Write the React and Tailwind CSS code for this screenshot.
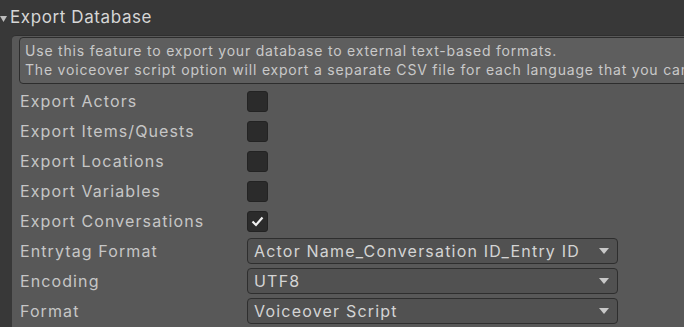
import React from "react";

const toggles = [
  { label: "Export Actors", checked: false },
  { label: "Export Items/Quests", checked: false },
  { label: "Export Locations", checked: false },
  { label: "Export Variables", checked: false },
  { label: "Export Conversations", checked: true },
];

const popups = [
  { label: "Entrytag Format", value: "Actor Name_Conversation ID_Entry ID" },
  { label: "Encoding", value: "UTF8" },
  { label: "Format", value: "Voiceover Script" },
];

function Checkbox({ checked }) {
  return (
    <div className="w-[21px] h-[21px] rounded-[3px] bg-[#2b2b2b] border border-[#232323] flex items-center justify-center">
      {checked && (
        <svg width="13" height="11" viewBox="0 0 13 11">
          <polyline points="1.5,5.5 5,9 11.5,1.5" fill="none" stroke="#f0f0f0" strokeWidth="2.2" />
        </svg>
      )}
    </div>
  );
}

function Popup({ value }) {
  return (
    <div className="w-[371px] h-[26px] rounded-[4px] bg-[#515151] border border-[#2e2e2e] flex items-center justify-between pl-[6px] pr-[8px]">
      <span className="text-[#d4d4d4] tracking-[1.2px]">{value}</span>
      <svg width="10" height="6" viewBox="0 0 10 6">
        <polygon points="0,0 10,0 5,6" fill="#c8c8c8" />
      </svg>
    </div>
  );
}

export default function App() {
  return (
    <div
      className="w-[684px] h-[327px] bg-[#383838] overflow-hidden text-[16px]"
      style={{ fontFamily: "Inter, 'Noto Sans', sans-serif" }}
    >
      {/* foldout header */}
      <div className="h-[35px] flex items-center">
        <svg width="8" height="8" viewBox="0 0 8 8" className="mt-[2px]">
          <polygon points="0,1 7,1 3.5,7" fill="#bdbdbd" />
        </svg>
        <span className="ml-[2px] text-[17px] text-[#d6d6d6] tracking-[0.6px]">Export Database</span>
      </div>

      <div className="ml-[12px] h-[292px] bg-[#585858] rounded-tl-[4px] border-t border-[#2f2f2f]">
        {/* help box */}
        <div className="ml-[7px] mt-[1px] w-[700px] h-[47px] rounded-[4px] bg-[#5e5e5e] border border-[#2d2d2d] px-[5px] pt-[3px] text-[14px] leading-[19px] text-[#c9c9c9] whitespace-nowrap tracking-[0.8px]">
          <div>Use this feature to export your database to external text-based formats.</div>
          <div>The voiceover script option will export a separate CSV file for each language that you can</div>
        </div>

        <div className="mt-[2px] pl-[8px]">
          {toggles.map((t) => (
            <div key={t.label} className="h-[30px] flex items-center">
              <span className="w-[227px] text-[#c6c6c6] tracking-[1.1px]">{t.label}</span>
              <Checkbox checked={t.checked} />
            </div>
          ))}
          {popups.map((p) => (
            <div key={p.label} className="h-[30px] flex items-center">
              <span className="w-[227px] text-[#c6c6c6] tracking-[1.1px]">{p.label}</span>
              <Popup value={p.value} />
            </div>
          ))}
        </div>
      </div>
    </div>
  );
}
